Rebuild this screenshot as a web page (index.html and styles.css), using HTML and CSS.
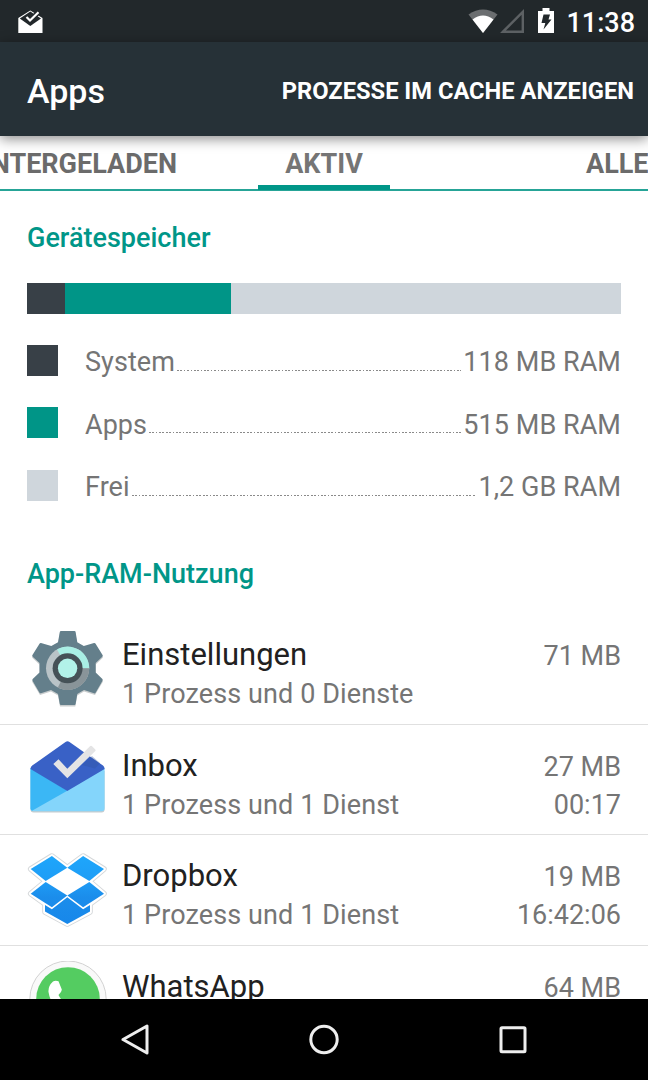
FILE: index.html
```html
<!DOCTYPE html>
<html lang="de">
<head>
    <meta charset="UTF-8">
    <meta name="viewport" content="width=device-width, initial-scale=1.0">
    <title>Apps</title>
    <link rel="stylesheet" href="styles.css">
</head>
<body>
    <div class="screen">
        <!-- Statusleiste -->
        <div class="status-bar">
            <svg class="status-mail" width="26" height="24" viewBox="0 0 26 24">
                <path d="M0.3 8 L12.3 0.5 L24.5 8 V23 H0.3 Z" fill="#fff"/>
                <path d="M1.8 8.5 L12.3 1.6 L23 8.5 L12.3 16 Z" fill="#22282b"/>
                <path d="M8.5 7 L12 10.5 L20.5 2.3" fill="none" stroke="#22282b" stroke-width="5"/>
                <path d="M8.5 7 L12 10.5 L20.5 2.3" fill="none" stroke="#fff" stroke-width="2.2"/>
            </svg>
            <div class="status-right">
                <svg class="icon-wifi" width="30" height="25" viewBox="0 0 30 25">
                    <path d="M0.5 5.5 Q15 -4.5 29.5 5.5 L15 24 Z" fill="#6b6e70"/>
                    <path d="M4.5 10.5 Q15 2.5 25.5 10.5 L15 24 Z" fill="#fff"/>
                </svg>
                <svg class="icon-signal" width="26" height="25" viewBox="0 0 26 25">
                    <path d="M3 22.7 L22.8 3 V22.7 Z" fill="none" stroke="#5d6164" stroke-width="2.4"/>
                </svg>
                <svg class="icon-battery" width="16" height="25" viewBox="0 0 16 25">
                    <path d="M0 3 H4.5 V0 H11.5 V3 H16 V25 H0 Z" fill="#fff"/>
                    <path d="M5.5 6.5 H12 L10.5 11.5 H13.5 L5.5 21.5 L7.3 15 H3.5 Z" fill="#22282b"/>
                </svg>
                <span class="clock">11:38</span>
            </div>
        </div>

        <div class="action-bar">
            <h1>Apps</h1>
            <span class="action-item">PROZESSE IM CACHE ANZEIGEN</span>
        </div>

        <div class="tabs">
            <div class="tab tab-prev">HERUNTERGELADEN</div>
            <div class="tab tab-active">AKTIV</div>
            <div class="tab tab-next">ALLE</div>
        </div>

        <div class="content">
            <div class="memory">
                <h2>Gerätespeicher</h2>
                <div class="memory-bar">
                    <div class="bg-system" style="width: 6.4%"></div>
                    <div class="bg-apps" style="width: 28%"></div>
                </div>
                <div class="legend-row">
                    <span class="swatch bg-system"></span>
                    <span class="legend-label">System</span>
                    <span class="dots"></span>
                    <span class="legend-value">118 MB RAM</span>
                </div>
                <div class="legend-row">
                    <span class="swatch bg-apps"></span>
                    <span class="legend-label">Apps</span>
                    <span class="dots"></span>
                    <span class="legend-value">515 MB RAM</span>
                </div>
                <div class="legend-row">
                    <span class="swatch bg-free"></span>
                    <span class="legend-label">Frei</span>
                    <span class="dots"></span>
                    <span class="legend-value">1,2 GB RAM</span>
                </div>
            </div>

            <h2 class="list-title">App-RAM-Nutzung</h2>

            <!-- App-Liste -->
            <div class="app-row">
                <svg class="app-icon" viewBox="0 0 81 81">
                    <path d="M33 3.5 H48.3 L50.3 15 L56.8 18.5 L68 15.5 L76 28.5 L68.7 35.5 V45 L76 52.5 L68 66 L57 62.5 L50.3 66.5 L48.3 77.5 H33 L31 66.5 L24 62.5 L13 66 L5 52.5 L12.5 45 V35.5 L5 28.5 L13 15.5 L24.5 18.5 L31 15 Z" fill="#c9cdce"/>
                    <path d="M34 2 H47.5 Q48.5 2 48.6 3 L50.3 13.3 L56.8 17 L67 14 Q68 13.7 68.6 14.7 L75.7 26.3 Q76 27 75.3 27.7 L68.7 34 V43.6 L75.4 50 Q76 51 75.5 51.7 L68.6 63.8 Q68 64.7 67 64.3 L57 61 L50.3 65 L48.6 75 Q48.4 76 47.5 76 H34 Q33 76 32.8 75 L31 65 L24 61 L14 64.3 Q13 64.5 12.5 63.8 L5.5 51.7 Q5 51 5.7 50 L12.5 43.6 V34 L5.7 27.7 Q5 27 5.3 26.3 L12.5 14.7 Q13 13.8 14 14 L24.3 17 L31 13.3 L32.8 3 Q33 2 34 2 Z" fill="#647f8b"/>
                    <circle cx="40.6" cy="39.3" r="21.6" fill="#b9c3c7"/>
                    <path d="M40.6 39.3 L30 20.4 A21.6 21.6 0 0 1 62.2 39.3 Z" fill="#a9efe5"/>
                    <path d="M40.6 39.3 H62.2 A21.6 21.6 0 0 1 30.8 58.6 Z" fill="#899499"/>
                    <circle cx="40.6" cy="39.3" r="15" fill="#455157"/>
                    <circle cx="40.6" cy="39.3" r="9.7" fill="#b2f2e9"/>
                </svg>
                <div class="app-info">
                    <div class="line line-name">
                        <span class="app-name">Einstellungen</span>
                        <span>71 MB</span>
                    </div>
                    <div class="line">
                        <span class="app-detail">1 Prozess und 0 Dienste</span>
                    </div>
                </div>
            </div>

            <div class="app-row">
                <svg class="app-icon" viewBox="0 0 81 81">
                    <path d="M3.5 31 H77.6 V69.5 Q77.6 72.5 74.6 72.5 H6.5 Q3.5 72.5 3.5 69.5 Z" fill="#c6cccf"/>
                    <path d="M3.5 28 L40.3 49 L77.6 28 V68.2 Q77.6 71.2 74.6 71.2 H6.5 Q3.5 71.2 3.5 68.2 Z" fill="#84d5fb"/>
                    <path d="M3.5 28 L40.3 50.7 L5 70.8 Q3.5 70 3.5 68.2 Z" fill="#3bb7f5"/>
                    <path d="M3.5 29 Q3.5 26.8 5.2 25.6 L38.5 2 Q40.5 0.5 42.5 2 L76 25.6 Q77.6 26.8 77.6 29 L40.3 51 Z" fill="#3961c6"/>
                    <path d="M55 25 L65 16 L73 23 L68 28.5 Z" fill="#31529f" opacity=".35"/>
                    <path d="M26.3 24 L31.5 19.2 L40.3 28.8 L63.2 6 Q64 5.3 64.8 6 L68.3 9.5 Q69 10.3 68.3 11 L40.3 38.3 Z" fill="#e4e4e5"/>
                </svg>
                <div class="app-info">
                    <div class="line line-name">
                        <span class="app-name">Inbox</span>
                        <span>27 MB</span>
                    </div>
                    <div class="line">
                        <span class="app-detail">1 Prozess und 1 Dienst</span>
                        <span>00:17</span>
                    </div>
                </div>
            </div>

            <div class="app-row">
                <svg class="app-icon" viewBox="0 0 81 81">
                    <defs>
                        <linearGradient id="dropbox-blue" gradientUnits="userSpaceOnUse" x1="0" y1="6" x2="0" y2="75">
                            <stop offset="0" stop-color="#1ea6fb"/>
                            <stop offset=".35" stop-color="#1e9df6"/>
                            <stop offset=".6" stop-color="#1b8deb"/>
                            <stop offset="1" stop-color="#1787ea"/>
                        </linearGradient>
                        <path id="dropbox-outline" d="M24.9 6 L40.3 17.5 L56.1 6 L77 19 L62.5 31.3 L77 43.7 L63 54 V62 L40.3 74 L18 62 V54 L3.7 43.7 L18.5 31.3 L3.7 19 Z"/>
                    </defs>
                    <use href="#dropbox-outline" fill="#d5d8da" stroke="#d5d8da" stroke-width="5.6" stroke-linejoin="round"/>
                    <use href="#dropbox-outline" fill="#fff" stroke="#fff" stroke-width="3.8" stroke-linejoin="round"/>
                    <g fill="url(#dropbox-blue)">
                        <path d="M24.9 6 L40.3 17.7 L18.7 31 L3.7 19 Z"/>
                        <path d="M56.1 6 L77 19 L62.3 31 L40.3 17.7 Z"/>
                        <path d="M18.7 32 L40.3 45.5 L24.9 57.3 L3.7 43.7 Z"/>
                        <path d="M62.3 32 L77 43.7 L56.1 57.3 L40.3 45.5 Z"/>
                        <path d="M18 55 L24.9 59.3 L40.3 47.3 L56.1 59.3 L63 55 V61.5 L40.3 74 L18 61.5 Z"/>
                    </g>
                </svg>
                <div class="app-info">
                    <div class="line line-name">
                        <span class="app-name">Dropbox</span>
                        <span>19 MB</span>
                    </div>
                    <div class="line">
                        <span class="app-detail">1 Prozess und 1 Dienst</span>
                        <span>16:42:06</span>
                    </div>
                </div>
            </div>

            <div class="app-row">
                <svg class="app-icon" viewBox="0 0 81 81">
                    <circle cx="41" cy="38.2" r="38.2" fill="#f9f9f9" stroke="#d2d2d2" stroke-width="1"/>
                    <circle cx="41" cy="38" r="31.8" fill="#54cc61"/>
                    <path d="M26 20.5 Q28.5 19 31.5 20.3 L34.8 28.5 Q34.8 30.5 31.5 34 Q36 43 46 47.5 L50 43.5 L59 48 Q58 57 50 57 Q25 52 21.5 31 Q21 25 26 20.5 Z" fill="#fff"/>
                </svg>
                <div class="app-info">
                    <div class="line line-name">
                        <span class="app-name">WhatsApp</span>
                        <span>64 MB</span>
                    </div>
                </div>
            </div>
        </div>

        <!-- Navigationsleiste -->
        <div class="nav-bar">
            <svg width="32" height="32" viewBox="0 0 32 32">
                <path d="M4 15.5 L28 2 V29 Z"/>
            </svg>
            <svg width="32" height="32" viewBox="0 0 32 32">
                <circle cx="16" cy="15.5" r="13.2"/>
            </svg>
            <svg width="32" height="32" viewBox="0 0 32 32">
                <rect x="4" y="3.7" width="24" height="24" rx="1"/>
            </svg>
        </div>
    </div>
</body>
</html>
```
FILE: styles.css
```css
* {
    box-sizing: border-box;
}
body {
    margin: 0;
    font-family: Roboto, "Noto Sans", sans-serif;
    font-size: 27px;
    color: #757575;
    background: #fff;
}
h1,
h2 {
    margin: 0;
    font-weight: 500;
}
svg {
    display: block;
    flex: none;
}
.screen {
    display: flex;
    flex-direction: column;
    width: 648px;
    height: 1080px;
    overflow: hidden;
}

.status-bar {
    display: flex;
    flex: none;
    justify-content: space-between;
    height: 42px;
    padding: 0 13px 0 18px;
    background: #22282b;
}
.status-mail {
    margin-top: 10px;
}
.status-right {
    display: flex;
}
.icon-wifi {
    margin-top: 9px;
}
.icon-signal {
    margin: 9px 0 0 2px;
}
.icon-battery {
    margin: 8px 12px 0 12px;
}
.clock {
    color: #fff;
    font-weight: 500;
    line-height: 46px;
}

.action-bar {
    display: flex;
    flex: none;
    justify-content: space-between;
    align-items: center;
    height: 94px;
    padding: 2px 14px 0 27px;
    background: #263137;
    color: #fff;
    box-shadow: 0 3px 12px rgba(0, 0, 0, 0.45);
    z-index: 1;
}
.action-bar h1 {
    font-size: 34px;
    line-height: 44px;
    padding-top: 2px;
}
.action-item {
    padding-top: 2px;
    font-size: 23.7px;
    font-weight: 700;
    white-space: nowrap;
}

.tabs {
    display: flex;
    flex: none;
    height: 55px;
    border-bottom: 2px solid #26a497;
    font-weight: 700;
    line-height: 56px;
    color: #6b6b6b;
    white-space: nowrap;
}
.tab {
    flex: none;
}
.tab-prev {
    display: flex;
    justify-content: flex-end;
    width: 204px;
    padding-right: 27px;
    margin-right: 54px;
    overflow: hidden;
}
.tab-active {
    width: 132px;
    height: 54px;
    border-bottom: 5px solid #009688;
    text-align: center;
    color: #757575;
}
.tab-next {
    margin-left: 196px;
}

.content {
    flex: 1;
    min-height: 0;
    padding-top: 31px;
    overflow: hidden;
}
.content h2 {
    font-size: 27px;
    line-height: 32px;
    color: #009688;
}
.memory {
    padding: 0 27px;
}
.memory-bar {
    display: flex;
    height: 31px;
    margin: 29.4px 0 14.6px;
    background: #cfd6dc;
}
.bg-system {
    background: #384047;
}
.bg-apps {
    background: #009587;
}
.bg-free {
    background: #cfd6dc;
}
.legend-row {
    display: flex;
    align-items: center;
    height: 62.5px;
    line-height: 35px;
}
.swatch {
    width: 31px;
    height: 31px;
    margin-right: 27px;
}
.legend-label,
.legend-value {
    padding-top: 5px;
    letter-spacing: 0.05px;
}
.dots {
    flex: 1;
    height: 1px;
    margin: 20px 2px 0 2px;
    background: repeating-linear-gradient(to right, #8a8a8a 0 1.7px, #fff 1.7px 3.375px);
}
.list-title {
    margin-top: 42px;
    padding: 0 27px;
}

.list-title + .app-row {
    margin-top: 23.7px;
}
.app-row {
    display: flex;
    height: 110.5px;
    padding: 15px 27px 0;
    border-bottom: 1px solid #e0e0e0;
}
.app-icon {
    width: 81px;
    height: 81px;
}
.app-info {
    flex: 1;
    padding: 6px 0 0 14px;
}
.line {
    display: flex;
    justify-content: space-between;
    align-items: baseline;
    height: 38px;
    line-height: 38px;
}
.line-name {
    height: 40px;
    line-height: 40px;
}
.app-name {
    font-size: 31px;
    color: #212121;
}
.app-detail {
    letter-spacing: 0.1px;
}

.nav-bar {
    display: flex;
    flex: none;
    justify-content: space-between;
    align-items: center;
    height: 81px;
    padding: 0 119px;
    background: #000;
}
.nav-bar svg {
    fill: none;
    stroke: #eee;
    stroke-width: 3;
    stroke-linejoin: round;
}
```
